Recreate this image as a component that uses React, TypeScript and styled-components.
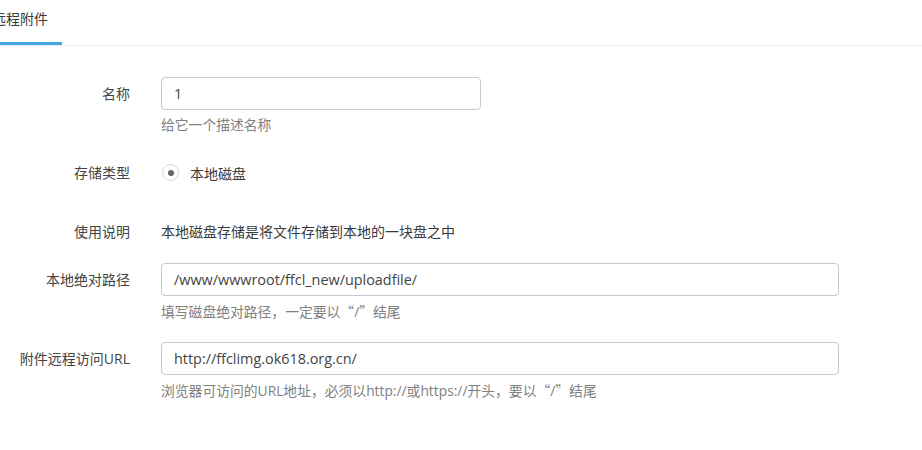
import React from "react";
import styled, { createGlobalStyle } from "styled-components";

const Global = createGlobalStyle`
  html, body { margin: 0; padding: 0; background: #fff; }
  body {
    font-family: "Open Sans", "Noto Sans CJK SC", sans-serif;
    font-size: 14px;
    color: #333;
  }
  * { box-sizing: border-box; }
`;

const Page = styled.div`
  width: 922px;
  height: 450px;
  overflow: hidden;
`;

const TabBar = styled.div`
  display: flex;
  height: 46px;
  border-bottom: 1px solid #eeeeee;
  margin-left: -22px;
`;

const Tab = styled.div<{ $active?: boolean }>`
  padding: 0 14px;
  height: 45px;
  line-height: 38px;
  font-size: 14px;
  color: #3a3a3a;
  border-bottom: 3px solid ${(p) => (p.$active ? "#3fa9e1" : "transparent")};
  margin-bottom: -1px;
`;

const Form = styled.div`
  padding-top: 31px;
`;

const Row = styled.div<{ $mb: number }>`
  display: grid;
  grid-template-columns: 130px 678px;
  column-gap: 31px;
  margin-bottom: ${(p) => p.$mb}px;
`;

const Label = styled.div`
  text-align: right;
  line-height: 33px;
  font-size: 14px;
  color: #444;
  white-space: nowrap;
`;

const Control = styled.div`
  display: flex;
  flex-direction: column;
  align-items: flex-start;
`;

const Input = styled.input<{ $w: number }>`
  width: ${(p) => p.$w}px;
  height: 33px;
  border: 1px solid #c2c9d6;
  border-radius: 4px;
  padding: 0 12px;
  font-family: "Open Sans", "Noto Sans CJK SC", sans-serif;
  font-size: 14.4px;
  color: #444;
  outline: none;
  background: #fff;
`;

const Help = styled.div`
  margin-top: 5px;
  line-height: 20px;
  font-size: 13.8px;
  color: #808080;
  white-space: nowrap;
`;

const Quote = styled.span`
  font-family: "Noto Sans CJK SC", sans-serif;
  font-feature-settings: "fwid" 1;
`;

const Plain = styled.div`
  line-height: 33px;
  font-size: 14px;
  color: #3a3a3a;
  white-space: nowrap;
`;

const RadioWrap = styled.label`
  display: flex;
  align-items: center;
  height: 33px;
  gap: 11px;
  font-size: 14px;
  color: #3a3a3a;
`;

const RadioCircle = styled.span`
  width: 17px;
  height: 17px;
  border-radius: 50%;
  border: 1px solid #d6d6d6;
  display: flex;
  align-items: center;
  justify-content: center;
  margin-left: 1px;
  &::after {
    content: "";
    width: 6px;
    height: 6px;
    border-radius: 50%;
    background: #666;
  }
`;

export default function App() {
  return (
    <Page>
      <Global />
      <TabBar>
        <Tab $active>远程附件</Tab>
      </TabBar>
      <Form>
        <Row $mb={21}>
          <Label>名称</Label>
          <Control>
            <Input $w={320} defaultValue="1" />
            <Help>给它一个描述名称</Help>
          </Control>
        </Row>
        <Row $mb={26}>
          <Label>存储类型</Label>
          <Control>
            <RadioWrap>
              <RadioCircle />
              本地磁盘
            </RadioWrap>
          </Control>
        </Row>
        <Row $mb={15}>
          <Label>使用说明</Label>
          <Control>
            <Plain>本地磁盘存储是将文件存储到本地的一块盘之中</Plain>
          </Control>
        </Row>
        <Row $mb={20}>
          <Label>本地绝对路径</Label>
          <Control>
            <Input $w={678} defaultValue="/www/wwwroot/ffcl_new/uploadfile/" />
            <Help>
              填写磁盘绝对路径，一定要以<Quote>“</Quote>/<Quote>”</Quote>结尾
            </Help>
          </Control>
        </Row>
        <Row $mb={20}>
          <Label>附件远程访问URL</Label>
          <Control>
            <Input $w={678} defaultValue="http://ffclimg.ok618.org.cn/" />
            <Help>
              浏览器可访问的URL地址，必须以http://或https://开头，要以<Quote>“</Quote>/<Quote>”</Quote>结尾
            </Help>
          </Control>
        </Row>
      </Form>
    </Page>
  );
}
